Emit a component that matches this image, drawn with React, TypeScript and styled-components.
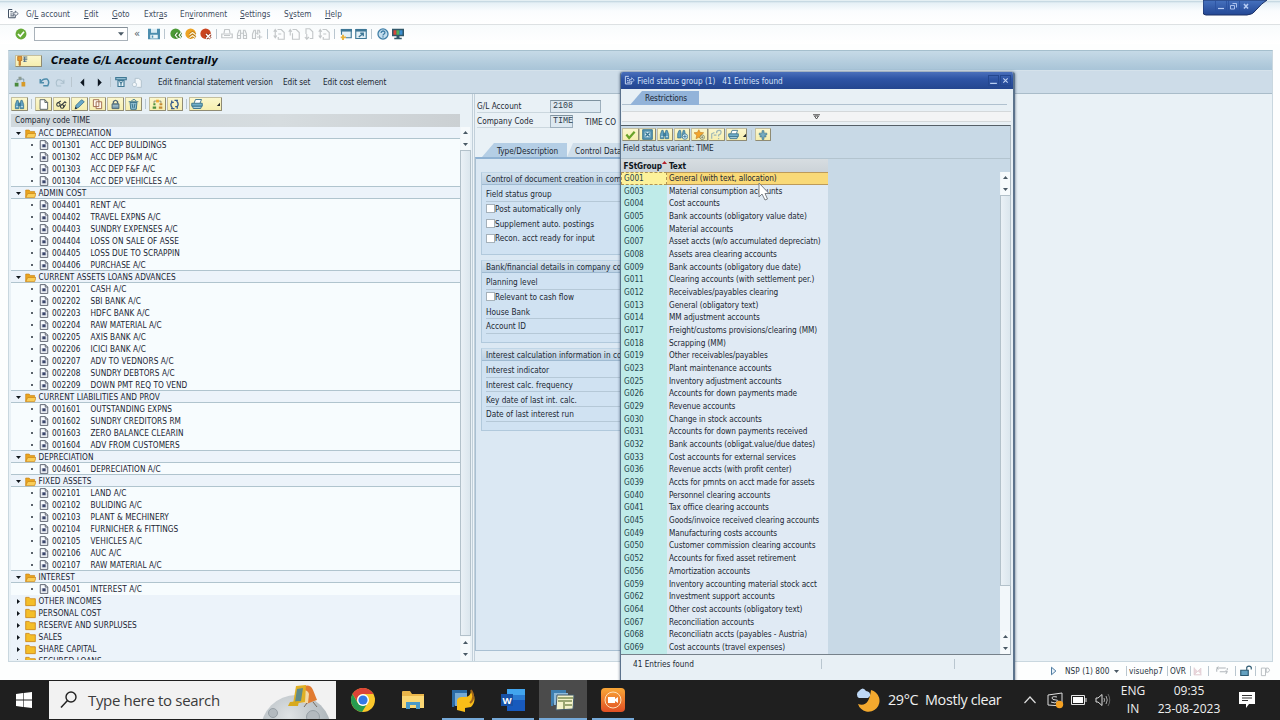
import React from 'react';
import styled, { createGlobalStyle, css } from 'styled-components';

const GlobalStyle = createGlobalStyle`
	* {
		box-sizing: border-box;
	}

	body {
		margin: 0;
		overflow: hidden;
		background: #fdfefe;
		font-family: 'DejaVu Sans Condensed', 'DejaVu Sans', sans-serif;
		font-stretch: condensed;
		font-size: 8.2px;
		line-height: 12px;
		letter-spacing: -0.08px;
		color: #1c2833;
	}

	svg {
		display: block;
		flex: none;
	}
`;

const Screen = styled.div`
	position: relative;
	width: 1280px;
	height: 720px;
	display: flex;
	flex-direction: column;
	overflow: hidden;
	white-space: nowrap;
`;

/* ---------- window chrome ---------- */

const MenuBar = styled.div`
	flex: none;
	height: 25px;
	padding: 3px 0 0 7px;
	display: flex;
	align-items: center;
	letter-spacing: 0;
	color: #3d4c60;
	border-top: 1px solid #e4eff3;
	border-bottom: 1px solid #dde1e3;
	background: linear-gradient(#bdd2dd 0, #e6f0f6 2px, #fafcfe 10px, #fff 100%);
`;

const Cell = styled.div<{ $w: number; $center?: boolean }>`
	flex: none;
	width: ${(p) => p.$w}px;
	display: flex;
	align-items: center;
	justify-content: ${(p) => (p.$center ? 'center' : 'flex-start')};
	white-space: pre;
`;

const ToolBar = styled.div`
	flex: none;
	height: 19px;
	padding: 0 0 1px 13px;
	display: flex;
	align-items: center;
	background: linear-gradient(#f8fbfc, #fff);
`;

const Command = styled.div`
	width: 94px;
	height: 14px;
	margin-left: 6px;
	padding-right: 3px;
	display: flex;
	align-items: center;
	justify-content: flex-end;
	background: #fff;
	border: 1px solid #a9b2ba;
	border-top-color: #848e97;
`;

const Chevrons = styled.div`
	width: 18px;
	text-align: center;
	font-size: 11px;
	line-height: 10px;
	color: #4b5a66;
`;

const Sep = styled.div<{ $m?: number }>`
	flex: none;
	width: 1px;
	height: 10px;
	margin: 0 ${(p) => p.$m ?? 3}px;
	background: #b9c6cf;
`;

const WindowButtons = styled.div`
	position: absolute;
	top: 0;
	left: 1203px;
	width: 64px;
	height: 16px;
`;

const Frame = styled.div`
	flex: none;
	width: 1265px;
	height: 612px;
	margin: 6px 0 0 8px;
	display: flex;
	flex-direction: column;
	background: #e9f1f6;
	border: 1px solid #c9d7df;
	border-top: 1px solid #a5bfcd;
`;

const TitleBar = styled.div`
	flex: none;
	height: 20px;
	padding-left: 6px;
	display: flex;
	align-items: center;
	background: linear-gradient(#c6dae7, #aec8da 80%, #a8c4d8);
	border-bottom: 1px solid #d5e2eb;
`;

const Title = styled.h1`
	margin: 0 0 0 9px;
	font: italic bold 11.3px/18px 'DejaVu Sans Condensed', 'DejaVu Sans', sans-serif;
	font-stretch: condensed;
	letter-spacing: 0.07px;
	color: #050a10;
`;

const YellowButton = styled.div<{ $w?: number; $h?: number }>`
	flex: none;
	width: ${(p) => p.$w ?? 17}px;
	height: ${(p) => p.$h ?? 14}px;
	display: flex;
	align-items: center;
	justify-content: center;
	background: linear-gradient(#fbf7cd, #f6eeaf);
	border: 1px solid #c4bf9f;
	border-right-color: #8f8b73;
	border-bottom-color: #8f8b73;
	border-radius: 1px;
`;

const AppBar = styled.div`
	flex: none;
	height: 23px;
	padding-left: 5px;
	display: flex;
	align-items: center;
	background: #cddce8;
	border-bottom: 1px solid #a9bcc9;
`;

const Body = styled.div`
	flex: 1;
	min-height: 0;
	display: flex;
`;

/* ---------- account tree ---------- */

const TreePane = styled.div`
	flex: none;
	width: 463px;
	display: flex;
	flex-direction: column;
	padding-left: 2px;
`;

const TreeTools = styled.div`
	flex: none;
	height: 20px;
	display: flex;
	align-items: center;
	gap: 1px;
`;

const TreeHead = styled.div`
	flex: none;
	width: 449px;
	height: 13px;
	padding-left: 4px;
	letter-spacing: 0;
	background: linear-gradient(90deg, #d0d8dd, #d6dcdf 60%, #cbd0d3);
`;

const TreeBody = styled.div`
	display: flex;
	height: 533px;
`;

const TreeRows = styled.div`
	width: 449px;
	overflow: hidden;
	letter-spacing: 0.06px;
	background: #ecf3fa;
`;

const TreeRow = styled.div<{ $kind: 'open' | 'closed' | 'leaf' }>`
	height: 12px;
	display: flex;
	align-items: center;
	color: #1a2533;
	padding-left: ${(p) => (p.$kind === 'leaf' ? 20 : 5)}px;
	${(p) =>
		p.$kind === 'leaf' &&
		css`
			background: #f7fcfe;
		`}
	${(p) =>
		p.$kind === 'open' &&
		css`
			box-shadow: inset 0 -1px #b0c4ce, 0 -1px #b0c4ce;
			position: relative;
		`}
`;

const Dot = styled.div`
	width: 2px;
	height: 2px;
	margin-right: 5.5px;
	border-radius: 1px;
	background: #27313b;
`;

const Scroll = styled.div<{ $thumb: number }>`
	flex: none;
	width: 10px;
	display: flex;
	flex-direction: column;
	align-items: center;
	background: #f2f7fa;

	&::before {
		content: '';
		order: 2;
		width: 9px;
		height: ${(p) => p.$thumb}px;
		background: linear-gradient(90deg, #eaf1f6, #dbe6ed);
		border: 1px solid #b3c1ca;
	}
`;

const Arrow = styled.div<{ $order?: number; $push?: boolean }>`
	order: ${(p) => p.$order ?? 0};
	width: 9px;
	height: 11.5px;
	margin-top: ${(p) => (p.$push ? 'auto' : 0)};
	display: flex;
	align-items: center;
	justify-content: center;
	background: #f6fafc;
`;

/* ---------- detail form ---------- */

const Splitter = styled.div`
	flex: none;
	width: 3px;
	display: flex;
	align-items: center;
	background: #edf4f8;
	border-left: 1px solid #c2d0da;
	border-right: 1px solid #c2d0da;
`;

const Form = styled.div`
	flex: none;
	width: 480px;
	padding-top: 5px;
	display: flex;
	flex-direction: column;
	letter-spacing: 0;
`;

const FieldRow = styled.div`
	flex: none;
	height: 15px;
	padding-left: 2px;
	display: flex;
	align-items: center;
`;

const FieldLabel = styled.div`
	width: 73px;
	border-bottom: 1px solid #cbd7de;
`;

const Field = styled.div<{ $w: number }>`
	width: ${(p) => p.$w}px;
	height: 13px;
	margin-right: 12px;
	padding-left: 2px;
	line-height: 11px;
	font-family: 'Liberation Mono', monospace;
	font-size: 8.4px;
	color: #30404c;
	background: #dde9f1;
	border: 1px solid #9eb0bd;
	border-top-color: #7e929f;
`;

const Tabs = styled.div`
	flex: none;
	height: 14px;
	margin-top: 14px;
	padding-left: 7px;
	display: flex;
`;

const Tab = styled.div<{ $w: number; $active?: boolean }>`
	width: ${(p) => p.$w}px;
	height: 14px;
	padding: 1px 0 0 ${(p) => (p.$active ? 15 : 8)}px;
	line-height: 14px;
	background: ${(p) => (p.$active ? '#b4cee5' : '#cfdeea')};
	clip-path: polygon(${(p) => (p.$active ? 12 : 6)}px 0, 100% 0, 100% 100%, 0 100%);
`;

const TabPanel = styled.div`
	flex: none;
	height: 494px;
	padding: 13px 6px 0 5px;
	display: flex;
	flex-direction: column;
	gap: 5px;
	background: #dbe8f3;
	border: 1px solid #a9c0d2;
	border-top: 2px solid #8fb2d3;
`;

const Group = styled.div`
	height: 83px;
	background: #d0e2f2;
	border: 1px solid #b1c9dc;
	border-top-color: #c0d6e7;
`;

const GroupHead = styled.div`
	height: 12px;
	margin-bottom: 2px;
	padding-left: 4px;
	line-height: 12px;
	background: linear-gradient(#d4e2ed, #bcd1e4);
	border-bottom: 1px solid #9fbad1;
`;

const GroupRow = styled.div<{ $line: boolean }>`
	height: 14.67px;
	margin-left: 4px;
	display: flex;
	align-items: center;
	padding-top: 1px;
	border-bottom: 1px solid ${(p) => (p.$line ? '#b5c8d7' : 'transparent')};
`;

const Check = styled.div`
	width: 9px;
	height: 9px;
	background: #fff;
	border: 1px solid #a5b1ba;
`;

/* ---------- value help popup ---------- */

const Popup = styled.div`
	position: absolute;
	left: 620px;
	top: 72px;
	width: 395px;
	height: 612px;
	display: flex;
	flex-direction: column;
	background: #e8f0f5;
	border: solid #5c738c;
	border-width: 0 2px 0 1px;
	border-radius: 3px 3px 0 0;
	box-shadow: 0 0 3px rgba(30, 50, 80, 0.7);
	overflow: hidden;
`;

const PopupTitle = styled.div`
	flex: none;
	height: 17px;
	padding: 0 2px 0 3px;
	display: flex;
	align-items: center;
	white-space: pre;
	letter-spacing: -0.02px;
	color: #d3e1f8;
	background: linear-gradient(#4b70bb, #2e54a5 40%, #24468f);
`;

const TitleButton = styled.div`
	width: 11px;
	height: 11px;
	margin-left: 1px;
	display: flex;
	align-items: center;
	justify-content: center;
	border: 1px solid #24478f;
`;

const Grow = styled.div`
	flex: 1;
`;

const PopupTabs = styled.div`
	flex: none;
	height: 15px;
	margin: 1px 6px 0 1px;
	padding: 1px 0 0 8px;
	border-bottom: 1px solid #b0c1cf;
`;

const PopupTab = styled.div`
	width: 69px;
	height: 14px;
	padding-left: 15px;
	line-height: 14px;
	background: #92b3d9;
	clip-path: polygon(12px 0, 100% 0, 100% 100%, 0 100%);
`;

const Collapse = styled.div`
	flex: none;
	height: 11px;
	margin: 6px 2px 3px 1px;
	display: flex;
	align-items: center;
	justify-content: center;
	background: #f3f4f5;
	border: 1px solid #d4d8da;
	border-width: 1px 0;
`;

const HitList = styled.div`
	flex: none;
	height: 530px;
	margin-right: 2px;
	display: flex;
	flex-direction: column;
	background: #c8d9e6;
	border-top: 1px solid #555f67;
	border-bottom: 1px solid #76818a;
	border-right: 1px solid #aab7c0;
`;

const HitTools = styled.div`
	flex: none;
	height: 17px;
	padding-left: 1px;
	display: flex;
	align-items: center;
	gap: 0.8px;
`;

const Variant = styled.div`
	flex: none;
	height: 16px;
	padding: 0 0 0 2px;
	line-height: 11px;
	border-bottom: 1px solid #b3c4cf;
`;

const HitHead = styled.div`
	flex: none;
	display: flex;
	width: 207px;
	height: 13px;
	font-weight: bold;
	color: #0e151c;
	line-height: 14px;
	background: linear-gradient(#d7dde1, #ccd3d8);
`;

const SortMark = styled.div`
	align-self: flex-start;
	margin-top: 1px;
`;

const HitBody = styled.div`
	flex: 1;
	min-height: 0;
	display: flex;
	justify-content: space-between;
`;

const HitRow = styled.div<{ $selected: boolean }>`
	width: 207px;
	height: 12.676px;
	display: flex;
	line-height: 13px;
	background: ${(p) => (p.$selected ? '#f9d977' : '#e0eaf4')};
	${(p) =>
		p.$selected &&
		css`
			box-shadow: inset 0 1px #bd9a59, inset 0 -1px #bd9a59;
		`}
`;

const Code = styled.div<{ $selected: boolean }>`
	width: 46px;
	padding-left: 3px;
	margin-right: 2px;
	letter-spacing: 0;
	color: #25454b;
	background: ${(p) => (p.$selected ? '#fdf29a' : '#bfebe9')};
	${(p) =>
		p.$selected &&
		css`
			border: 1px dashed #b09355;
			padding-left: 2px;
			line-height: 11px;
		`}
`;

const PopupFoot = styled.div`
	flex: none;
	height: 17px;
	padding-left: 12px;
	display: flex;
	align-items: center;
	letter-spacing: 0;
`;

const Pointer = styled.div`
	position: absolute;
	left: 758px;
	top: 182px;
`;

const StatusBar = styled.div`
	flex: none;
	height: 18px;
	margin-left: 1049px;
	display: flex;
	align-items: center;
	letter-spacing: 0.06px;
	color: #28333d;
`;

/* ---------- taskbar ---------- */

const TaskBar = styled.div`
	position: absolute;
	left: 0;
	top: 680px;
	width: 1280px;
	height: 40px;
	display: flex;
	align-items: center;
	font-family: 'Open Sans', 'Noto Sans', sans-serif;
	font-stretch: normal;
	letter-spacing: 0;
	color: #f0f0f0;
	background: #1f1f1f;
`;

const SearchBox = styled.div`
	width: 287px;
	height: 38px;
	margin-left: 1px;
	padding-left: 11px;
	display: flex;
	align-items: center;
	font-size: 15px;
	letter-spacing: -0.33px;
	color: #3b3b3b;
	background: #f2f2f2;
	overflow: hidden;

	span {
		margin-left: 11px;
		width: 173px;
	}
`;

const Task = styled.div<{ $w?: number; $open?: boolean; $active?: boolean }>`
	width: ${(p) => p.$w ?? 50}px;
	height: 40px;
	display: flex;
	align-items: center;
	justify-content: center;
	background: ${(p) => (p.$active ? '#4b4b4b' : 'transparent')};
	${(p) =>
		p.$open &&
		css`
			border-bottom: 2px solid #76a9d8;
			padding-top: 2px;
			width: 42px;
			margin: 0 4px;
		`}
	${(p) =>
		p.$active &&
		css`
			width: 48px;
			margin: 0 1px;
		`}
`;

const Stack = styled.div<{ $w: number }>`
	width: ${(p) => p.$w}px;
	font-size: 12px;
	line-height: 18px;
	text-align: center;
`;

const Weather = styled.div`
	width: 136px;
	font-size: 14.4px;
	line-height: 20px;
	letter-spacing: -0.36px;
	white-space: pre;
`;

/* ---------- icons ---------- */

const blue = '#4d8eae';
const grey = '#c3c7c9';

const shapes: Record<string, React.ReactNode> = {
	exit: (
		<g fill="none" stroke="currentColor" strokeWidth="1.3">
			<path d="M7 2H2v11h9v-2M4.500 5h3M4.500 8h2M4.500 10.500h5" />
			<path d="M8 6.500h3V4l4 3.500-4 3.500V9H8z" strokeWidth="1" />
		</g>
	),
	ok: (
		<g>
			<circle cx="8" cy="8" r="7.300" fill="#67ab38" />
			<path d="M4 8l3 3 5-6" fill="none" stroke="#fff" strokeWidth="2.200" />
		</g>
	),
	save: (
		<g>
			<path d="M0 1h4v5h8V1h4v14H0z" fill={blue} />
			<path d="M4 1h8v5H4z" fill="#d9ecf4" />
			<path d="M3 9h10v5H3z" fill="#eaf5f9" />
			<path d="M6 10v3" stroke={blue} strokeWidth="2" />
		</g>
	),
	back: (
		<g>
			<circle cx="7.500" cy="7.500" r="7" fill="#4c9a37" />
			<path d="M10 6L7 9.500l3 3.500M15 6l-3 3.500 3 3.500" fill="none" stroke="#2d6c20" strokeWidth="3.500" />
			<path d="M10 6L7 9.500l3 3.500M15 6l-3 3.500 3 3.500" fill="none" stroke="#f4fcee" strokeWidth="1.700" />
		</g>
	),
	up: (
		<g>
			<circle cx="7.500" cy="7.500" r="7" fill="#eda323" />
			<path d="M6 9l4-3 4 3M6 13l4-3 4 3" fill="none" stroke="#b77410" strokeWidth="3.500" />
			<path d="M6 9l4-3 4 3M6 13l4-3 4 3" fill="none" stroke="#fff7d8" strokeWidth="1.700" />
		</g>
	),
	cancel: (
		<g>
			<circle cx="7.500" cy="7.500" r="7" fill="#c9431f" />
			<path d="M8 8l6 6M14 8l-6 6" stroke="#86250f" strokeWidth="4" />
			<path d="M8 8l6 6M14 8l-6 6" stroke="#fff" strokeWidth="2" />
		</g>
	),
	printG: <path d="M4 7l1-5h6l1 5M1 8h14v5H1zM4 10h8" fill="none" stroke={grey} strokeWidth="1.600" />,
	findG: <path d="M2 14V8l2-5h2v11zM14 14V8l-2-5h-2v11zM6 7h4M2 10h4M10 10h4" fill="none" stroke={grey} strokeWidth="1.600" />,
	findNextG: (
		<path d="M2 14V8l2-5h2v11zM12 7l-1-4H9v6M6 7h3M8 12h7M11.500 9v6" fill="none" stroke={grey} strokeWidth="1.600" />
	),
	pageUpUp: <path d="M6 2h5l4 4v9H7v-3M3 12V3M1 5l2-3 2 3M1 10l2 3 2-3M7 8h4" fill="none" stroke={grey} strokeWidth="1.500" />,
	pageUp: <path d="M6 2h5l4 4v9H6V7M3 10V2M1 5l2-3 2 3" fill="none" stroke={grey} strokeWidth="1.500" />,
	pageDown: <path d="M4 8V1h5l4 4v9H9M5 8v7M2.500 12L5 15l3-3" fill="none" stroke={grey} strokeWidth="1.500" />,
	session: (
		<g fill="none" stroke="#3e7796" strokeWidth="1.500">
			<path d="M2 9V2h13v11H8" fill="#e3f0f7" />
			<path d="M1 3h15" strokeWidth="3.500" />
			<path d="M4 9v7M1 12.500h7" stroke="#e9b23b" strokeWidth="2.500" />
		</g>
	),
	shortcut: (
		<g fill="none" stroke="#3e7796" strokeWidth="1.500">
			<path d="M1 2h14v12H1z" fill="#e3f0f7" />
			<path d="M1 3h14" strokeWidth="3.500" />
			<path d="M5 12l5-4M7 7h4v4" strokeWidth="1.800" />
		</g>
	),
	help: (
		<g fill="none" stroke="#3f7ea6" strokeWidth="1.700">
			<circle cx="8" cy="8" r="6.700" fill="#c4dded" />
			<path d="M5.500 6.500C5.500 3 11 3.300 10.500 6.500 10.300 8 8 8 8 10M8 11v1.800" />
		</g>
	),
	monitor: (
		<g>
			<path d="M0 1h16v10H0zM6 11h4v2h3v2H3v-2h3z" fill="#31586a" />
			<path d="M2 3h4v6H2z" fill="#d7473a" />
			<path d="M6 3h4v6H6z" fill="#52b05a" />
			<path d="M10 3h4v6h-4z" fill="#3b8ed1" />
		</g>
	),
	tree: (
		<g>
			<path d="M4 8V5h5V3M9 4h4v5" fill="none" stroke="#6b8894" />
			<path d="M1 9h5v5H1z" fill="#4a8a3d" />
			<path d="M6 1h4v4H6z" fill="#8d9c93" />
			<path d="M10 8h5v6h-5z" fill="#d79a28" />
		</g>
	),
	undo: <path d="M3 4v5h5M3 9q3-6 9-5 4 3 1 9H7" fill="none" stroke="#4f8dac" strokeWidth="2" />,
	redo: <path d="M13 4v5H8M13 9Q10 3 4 4q-4 3-1 9h6" fill="none" stroke="#aabfcc" strokeWidth="1.500" />,
	left: <path d="M11 1v14L4 8z" fill="#0d1620" />,
	right: <path d="M5 1v14l7-7z" fill="#0d1620" />,
	display: (
		<g fill="none" stroke="#3f7894" strokeWidth="1.500">
			<path d="M1 2h14v3H1z" fill="#8fbbd0" />
			<path d="M4 6h8v8H4z" fill="#e8f3f8" />
			<path d="M6 7l2 3 2-3M8 10v3" />
		</g>
	),
	other: <path d="M6 8V2h5l4 3v10H9M5 8a3 3 0 1 0 .1 0" fill="#f2f7fa" stroke="#aebfca" strokeWidth="1.300" />,
	find: (
		<g fill="#62a2c1" stroke="#34718f" strokeWidth="1.100">
			<path d="M2 14V8l2-6h2l1 5v7zM14 14V8l-2-6h-2L9 7v7zM7 6h2v4H7z" />
			<path d="M3 11h3M10 11h3" stroke="#d6edf6" />
		</g>
	),
	findNext: (
		<g fill="#62a2c1" stroke="#34718f" strokeWidth="1.100">
			<path d="M1 13V7l2-5h2l1 5v6zM12 8l-1-6H9L8 7v6z" />
			<circle cx="11.500" cy="11" r="4" fill="#d9eef7" />
			<path d="M9 11h5M11.500 8.500v5" />
		</g>
	),
	page: <path d="M3 1h7l4 4v10H3zM10 1v4h4" fill="#fff" stroke="#4d5961" strokeWidth="1.300" />,
	glasses: (
		<g fill="none" stroke="#2d3436" strokeWidth="1.500">
			<circle cx="3.500" cy="8" r="2.500" />
			<circle cx="9" cy="11" r="2.500" />
			<path d="M2 6l5-3M8 9l5-5 2 2M11 12l3-4" />
		</g>
	),
	pencil: (
		<g>
			<path d="M2 14l1-5 8-8 4 3-8 8z" fill="#69a8c9" stroke="#276487" />
			<path d="M1 15l1-4 3 3z" fill="#28373f" />
		</g>
	),
	copy: <path d="M2 1h8v10H2zM6 4h8v10H6z" fill="#fff8ef" stroke="#9b6549" strokeWidth="1.300" />,
	lock: (
		<g stroke="#4e6673" strokeWidth="1.400">
			<path d="M5 7V4q3-4 6 0v3" fill="none" strokeWidth="2" />
			<path d="M3 7h10v7H3z" fill="#7299ab" />
			<path d="M4 10h8" stroke="#b8cdd7" />
		</g>
	),
	trash: (
		<g fill="#91bfd1" stroke="#38728d" strokeWidth="1.400">
			<path d="M3 5h10l-1 10H4z" />
			<path d="M1 4h14M5 3l2-2h3l2 2M6 7l1 6M10 7l-1 6" fill="none" />
		</g>
	),
	hierarchy: (
		<g>
			<path d="M3 6V3h10v3" fill="none" stroke="#6b6b50" />
			<path d="M6 1h4v4H6z" fill="#f0aa34" />
			<path d="M2 6h3v3H2zM1 11h5v3H1z" fill="#4d9140" />
			<path d="M11 6h4v3h-4zM10 11h5v3h-5z" fill="#c38b36" />
		</g>
	),
	refresh: (
		<path d="M5 13Q1 9 4 5l3 0M4 2v4M11 3q4 4 1 8H9M12 14v-4M8 2h5M3 14h5" fill="none" stroke="#345b8c" strokeWidth="1.900" />
	),
	print: (
		<g stroke="#346f8a" strokeWidth="1.200">
			<path d="M4 7l2-5h8l-2 5" fill="#fff" />
			<path d="M1 7h14v4H1z" fill="#72afc9" />
			<path d="M2 11h12l-1 3H3z" fill="#a8d0df" />
		</g>
	),
	badge: (
		<g>
			<path d="M1 2h6v6H5v7H3V8H1z" fill="#e59a2a" stroke="#a95f20" />
			<path d="M9 3h6M9 6h6M9 9h5M11 2v8" stroke="#57748c" strokeWidth="1.500" />
		</g>
	),
	check: <path d="M2 8l4 5 8-9" fill="none" stroke="#69a329" strokeWidth="3.200" />,
	close: (
		<g>
			<path d="M1 1h14v14H1z" fill="#5594b3" stroke="#347391" strokeWidth="1.300" />
			<path d="M4 4h8v8H4z" fill="#d4eaf2" />
			<path d="M5 5l6 6M11 5l-6 6" stroke="#347391" strokeWidth="1.800" />
		</g>
	),
	star: (
		<g>
			<path d="M7 1l2 4 5 .5-4 3.500 1 5-4-2-4 2 1-5-4-3.500L5 5z" fill="#f3a52d" stroke="#c98427" />
			<circle cx="12" cy="12" r="3.300" fill="#fffbd9" stroke="#66714e" />
			<path d="M10 12h4M12 10v4" stroke="#66714e" />
		</g>
	),
	info: <path d="M1 14v-7l4-2M4 9h4M8 6q0-4 4-4t2 5l-3 2v2M11 13v2" fill="none" stroke="#9fb8b7" strokeWidth="1.800" />,
	pin: <path d="M6.500 1h3v4H14v3h-3l2 3h-3.500v4h-3v-4H3l2-3H2V5h4.500z" fill="#77acc1" stroke="#33708c" />,
	doc: (
		<g>
			<path d="M2 1h8l4 4v10H2z" fill="#f9fcff" stroke="#4a5160" strokeWidth="1.400" />
			<path d="M10 1v4h4" fill="none" stroke="#4a5160" strokeWidth="1.300" />
			<path d="M4 8h8M4 11h8" stroke="#8d94a8" strokeWidth="1.200" />
			<path d="M5.500 7h5v4.500h-5z" fill="#3a466c" />
		</g>
	),
	folder: <path d="M1 2h5l2 2h7v10H1z" fill="#f4be29" stroke="#c98417" strokeWidth="1.200" />,
	folderOpen: (
		<g stroke="#c98417">
			<path d="M1 14V3h5l2 2h6v3" fill="#eaa51e" />
			<path d="M1 14l3-6h12l-2 6z" fill="#f9cd58" />
		</g>
	),
	winMin: <path d="M2 13h12" stroke="#b9cef2" strokeWidth="2.200" />,
	winClose: <path d="M3 3l10 10M13 3L3 13" stroke="#c3d4f4" strokeWidth="2.400" />,
	play: <path d="M4 2v12l7-6z" fill="#e8f2fa" stroke="#43729b" strokeWidth="1.500" />,
	chart: <path d="M3 2v11h11M4 12l9-9v9" fill="#ead6dc" stroke="#dfcad1" />,
	arrows: <path d="M1 4h12M3 2L1 4l2 2M15 9H5M13 7l2 2-2 3M15 4v3M1 5v4" fill="none" stroke="#a5abb1" strokeWidth="1.200" />,
	unlock: (
		<g stroke="#2b5870" strokeWidth="1.500">
			<path d="M9 7V3q3-3 6 0v3" fill="none" />
			<path d="M1 7h10v7H1z" fill="#64a1c0" />
		</g>
	),
	pilot: <path d="M2 14V3h6v11H2M9 3h3q4 3 0 6H9z" fill="none" stroke="#b4b9be" strokeWidth="1.300" />,
};

const Icon: React.FunctionComponent<{ name: string; size?: number }> = ({ name, size = 12 }) => (
	<svg width={size} height={size} viewBox="0 0 16 16">
		{shapes[name]}
	</svg>
);

const Tri: React.FunctionComponent<{ dir: string; size?: number; fill?: string }> = ({ dir, size = 5, fill = '#4a5965' }) => (
	<svg width={size} height={size} viewBox="0 0 10 10">
		<path
			d={{ up: 'M0 8L5 2l5 6z', down: 'M0 2h10L5 8z', right: 'M2 0v10l6-5z', corner: 'M10 2v8H2z' }[dir]}
			fill={fill}
		/>
	</svg>
);

const ScrollBar: React.FunctionComponent<{ thumb: number }> = ({ thumb }) => (
	<Scroll $thumb={thumb}>
		<Arrow>
			<Tri dir="up" />
		</Arrow>
		<Arrow>
			<Tri dir="down" />
		</Arrow>
		<Arrow $order={3} $push>
			<Tri dir="up" />
		</Arrow>
		<Arrow $order={4}>
			<Tri dir="down" />
		</Arrow>
	</Scroll>
);

/* ---------- data ---------- */

// label before the mnemonic, mnemonic, rest, width up to the next entry
const menu: [string, string, string, number][] = [
	['G/', 'L', ' account', 58],
	['', 'E', 'dit', 28],
	['', 'G', 'oto', 32],
	['Extr', 'a', 's', 36],
	['En', 'v', 'ironment', 60],
	['', 'S', 'ettings', 44],
	['S', 'y', 'stem', 41],
	['', 'H', 'elp', 30],
];

const tree: { name: string; items?: string[] }[] = [
	{
		name: 'ACC DEPRECIATION',
		items: ['001301 ACC DEP BULIDINGS', '001302 ACC DEP P&M A/C', '001303 ACC DEP F&F A/C', '001304 ACC DEP VEHICLES A/C'],
	},
	{
		name: 'ADMIN COST',
		items: [
			'004401 RENT A/C',
			'004402 TRAVEL EXPNS A/C',
			'004403 SUNDRY EXPENSES A/C',
			'004404 LOSS ON SALE OF ASSE',
			'004405 LOSS DUE TO SCRAPPIN',
			'004406 PURCHASE A/C',
		],
	},
	{
		name: 'CURRENT ASSETS LOANS ADVANCES',
		items: [
			'002201 CASH A/C',
			'002202 SBI BANK A/C',
			'002203 HDFC BANK A/C',
			'002204 RAW MATERIAL A/C',
			'002205 AXIS BANK A/C',
			'002206 ICICI BANK A/C',
			'002207 ADV TO VEDNORS A/C',
			'002208 SUNDRY DEBTORS A/C',
			'002209 DOWN PMT REQ TO VEND',
		],
	},
	{
		name: 'CURRENT LIABILITIES AND PROV',
		items: ['001601 OUTSTANDING EXPNS', '001602 SUNDRY CREDITORS RM', '001603 ZERO BALANCE CLEARIN', '001604 ADV FROM CUSTOMERS'],
	},
	{ name: 'DEPRECIATION', items: ['004601 DEPRECIATION A/C'] },
	{
		name: 'FIXED ASSETS',
		items: [
			'002101 LAND A/C',
			'002102 BULIDING A/C',
			'002103 PLANT & MECHINERY',
			'002104 FURNICHER & FITTINGS',
			'002105 VEHICLES A/C',
			'002106 AUC A/C',
			'002107 RAW MATERIAL A/C',
		],
	},
	{ name: 'INTEREST', items: ['004501 INTEREST A/C'] },
	{ name: 'OTHER INCOMES' },
	{ name: 'PERSONAL COST' },
	{ name: 'RESERVE AND SURPLUSES' },
	{ name: 'SALES' },
	{ name: 'SHARE CAPITAL' },
	{ name: 'SECURED LOANS' },
];

const groups: { title: string; rows: [string, boolean][] }[] = [
	{
		title: 'Control of document creation in com',
		rows: [
			['Field status group', false],
			['Post automatically only', true],
			['Supplement auto. postings', true],
			['Recon. acct ready for input', true],
		],
	},
	{
		title: 'Bank/financial details in company cod',
		rows: [
			['Planning level', false],
			['Relevant to cash flow', true],
			['House Bank', false],
			['Account ID', false],
		],
	},
	{
		title: 'Interest calculation information in cor',
		rows: [
			['Interest indicator', false],
			['Interest calc. frequency', false],
			['Key date of last int. calc.', false],
			['Date of last interest run', false],
		],
	},
];

const hits = `G001 General (with text, allocation)
G003 Material consumption accounts
G004 Cost accounts
G005 Bank accounts (obligatory value date)
G006 Material accounts
G007 Asset accts (w/o accumulated depreciatn)
G008 Assets area clearing accounts
G009 Bank accounts (obligatory due date)
G011 Clearing accounts (with settlement per.)
G012 Receivables/payables clearing
G013 General (obligatory text)
G014 MM adjustment accounts
G017 Freight/customs provisions/clearing (MM)
G018 Scrapping (MM)
G019 Other receivables/payables
G023 Plant maintenance accounts
G025 Inventory adjustment accounts
G026 Accounts for down payments made
G029 Revenue accounts
G030 Change in stock accounts
G031 Accounts for down payments received
G032 Bank accounts (obligat.value/due dates)
G033 Cost accounts for external services
G036 Revenue accts (with profit center)
G039 Accts for pmnts on acct made for assets
G040 Personnel clearing accounts
G041 Tax office clearing accounts
G045 Goods/invoice received clearing accounts
G049 Manufacturing costs accounts
G050 Customer commission clearing accounts
G052 Accounts for fixed asset retirement
G056 Amortization accounts
G059 Inventory accounting material stock acct
G062 Investment support accounts
G064 Other cost accounts (obligatory text)
G067 Reconciliation accounts
G068 Reconciliatn accts (payables - Austria)
G069 Cost accounts (travel expenses)`.split('\n');

/* ---------- sections ---------- */

const Header = () => (
	<>
		<MenuBar>
			<Cell $w={19}>
				<Icon name="exit" size={12} />
			</Cell>
			{menu.map(([before, key, after, width]) => (
				<Cell key={before + key + after} $w={width}>
					{before}
					<u>{key}</u>
					{after}
				</Cell>
			))}
		</MenuBar>
		<ToolBar>
			<Cell $w={15} $center>
				<Icon name="ok" />
			</Cell>
			<Command>
				<Tri dir="down" size={6} />
			</Command>
			<Chevrons>«</Chevrons>
			<Cell $w={15} $center>
				<Icon name="save" />
			</Cell>
			<Sep />
			{['back', 'up', 'cancel'].map((name) => (
				<Cell key={name} $w={15} $center>
					<Icon name={name} />
				</Cell>
			))}
			<Sep />
			{['printG', 'findG', 'findNextG'].map((name) => (
				<Cell key={name} $w={14.8} $center>
					<Icon name={name} />
				</Cell>
			))}
			<Sep />
			{['pageUpUp', 'pageUp', 'pageDown', 'pageUpUp'].map((name, i) => (
				<Cell key={i} $w={15} $center>
					<Icon name={name} />
				</Cell>
			))}
			<Sep />
			<Cell $w={15} $center>
				<Icon name="session" />
			</Cell>
			<Cell $w={15} $center>
				<Icon name="shortcut" />
			</Cell>
			<Sep />
			<Cell $w={15} $center>
				<Icon name="help" />
			</Cell>
			<Cell $w={15} $center>
				<Icon name="monitor" />
			</Cell>
		</ToolBar>
		<WindowButtons>
			<svg width="64" height="16" viewBox="0 0 64 16">
				<defs>
					<linearGradient id="wb" x2="0" y2="1">
						<stop offset="0" stopColor="#4672bf" />
						<stop offset="1" stopColor="#234795" />
					</linearGradient>
				</defs>
				<path d="M0 0h64Q58 4 54 9q-4 6-10 6H3q-3 0-3-3z" fill="url(#wb)" stroke="#1d3266" />
				<g fill="none" stroke="#b7ccf3" strokeWidth="1.2">
					<path d="M15 8.500h6" />
					<path d="M29.500 3.500h4v4M27.500 5.500h4v3.500h-4z" strokeWidth="0.9" />
					<path d="M41 4l4 4.500M45 4l-4 4.500" strokeWidth="1.6" />
				</g>
				<path d="M12.500 1v10h11V1M25.500 1v10h11V1" fill="none" stroke="#2a50a0" strokeWidth="0.8" />
			</svg>
		</WindowButtons>
	</>
);

const Tree = () => (
	<TreePane>
		<TreeTools>
			<YellowButton $w={16.5}>
				<Icon name="find" size={11} />
			</YellowButton>
			<Sep $m={2.3} />
			{['page', 'glasses', 'pencil', 'copy', 'lock', 'trash'].map((name) => (
				<YellowButton key={name}>
					<Icon name={name} size={11} />
				</YellowButton>
			))}
			<Sep $m={2} />
			<YellowButton $w={16.5}>
				<Icon name="hierarchy" size={11} />
			</YellowButton>
			<YellowButton $w={16.5}>
				<Icon name="refresh" size={11} />
			</YellowButton>
			<Sep $m={1.5} />
			<YellowButton $w={33}>
				<Icon name="print" size={12} />
				<Cell $w={13} />
				<Tri dir="corner" size={4} fill="#20262b" />
			</YellowButton>
		</TreeTools>
		<TreeHead>Company code TIME</TreeHead>
		<TreeBody>
			<TreeRows>
				{tree.map(({ name, items }) => (
					<React.Fragment key={name}>
						<TreeRow $kind={items ? 'open' : 'closed'}>
							<Cell $w={9}>
								<Tri dir={items ? 'down' : 'right'} size={5} fill="#10161c" />
							</Cell>
							<Cell $w={13.5}>
								<Icon name={items ? 'folderOpen' : 'folder'} size={11} />
							</Cell>
							{name}
						</TreeRow>
						{items &&
							items.map((item) => (
								<TreeRow key={item} $kind="leaf">
									<Dot />
									<Cell $w={13.5}>
										<Icon name="doc" size={10} />
									</Cell>
									<Cell $w={38.5}>{item.slice(0, 6)}</Cell>
									{item.slice(7)}
								</TreeRow>
							))}
					</React.Fragment>
				))}
			</TreeRows>
			<ScrollBar thumb={484} />
		</TreeBody>
	</TreePane>
);

const Details = () => (
	<Form>
		<FieldRow>
			<FieldLabel>G/L Account</FieldLabel>
			<Field $w={51}>2108</Field>
		</FieldRow>
		<FieldRow>
			<FieldLabel>Company Code</FieldLabel>
			<Field $w={23}>TIME</Field>
			TIME CO
		</FieldRow>
		<Tabs>
			<Tab $w={85} $active>
				Type/Description
			</Tab>
			<Tab $w={85}>Control Data</Tab>
		</Tabs>
		<TabPanel>
			{groups.map(({ title, rows }) => (
				<Group key={title}>
					<GroupHead>{title}</GroupHead>
					{rows.map(([label, box]) => (
						<GroupRow key={label} $line={!box}>
							{box && <Check />}
							{label}
						</GroupRow>
					))}
				</Group>
			))}
		</TabPanel>
	</Form>
);

const ValueHelp = () => (
	<Popup>
		<PopupTitle>
			<Icon name="exit" size={11} />
			{' Field status group (1)   41 Entries found'}
			<Grow />
			<TitleButton>
				<Icon name="winMin" size={9} />
			</TitleButton>
			<TitleButton>
				<Icon name="winClose" size={7} />
			</TitleButton>
		</PopupTitle>
		<PopupTabs>
			<PopupTab>Restrictions</PopupTab>
		</PopupTabs>
		<Collapse>
			<svg width="7" height="6" viewBox="0 0 14 12">
				<path d="M0 1.500h14M3 4h8L7 10z" fill="#fff" stroke="#222" strokeWidth="1.500" />
			</svg>
		</Collapse>
		<HitList>
			<HitTools>
				{['check', 'close', 'find', 'findNext', 'star', 'info'].map((name) => (
					<YellowButton key={name} $w={16.5} $h={13}>
						<Icon name={name} size={11} />
					</YellowButton>
				))}
				<YellowButton $w={21.5} $h={13}>
					<Icon name="print" size={11} />
					<Cell $w={3} />
					<Tri dir="corner" size={4} fill="#20262b" />
				</YellowButton>
				<Sep $m={2.5} />
				<YellowButton $w={16} $h={13}>
					<Icon name="pin" size={10} />
				</YellowButton>
			</HitTools>
			<Variant>Field status variant: TIME</Variant>
			<HitHead>
				<Cell $w={48}>
					{' FStGroup'}
					<SortMark>
						<Tri dir="up" size={5} fill="#b51f2b" />
					</SortMark>
				</Cell>
				Text
			</HitHead>
			<HitBody>
				<div>
					{hits.map((hit, i) => (
						<HitRow key={hit} $selected={i === 0}>
							<Code $selected={i === 0}>{hit.slice(0, 4)}</Code>
							{hit.slice(5)}
						</HitRow>
					))}
				</div>
				<ScrollBar thumb={389} />
			</HitBody>
		</HitList>
		<PopupFoot>
			<Cell $w={188}>41 Entries found</Cell>
			<Sep $m={0} />
			<Cell $w={132} />
			<Sep $m={0} />
		</PopupFoot>
	</Popup>
);

const Status = () => (
	<StatusBar>
		<Cell $w={16}>
			<Icon name="play" size={10} />
		</Cell>
		<Cell $w={49}>NSP (1) 800</Cell>
		<Cell $w={10}>
			<Tri dir="down" size={5} />
		</Cell>
		<Sep $m={2} />
		<Cell $w={36}>visuehp7</Cell>
		<Sep $m={2} />
		<Cell $w={19}>OVR</Cell>
		<Sep $m={1} />
		<Cell $w={15}>
			<Icon name="chart" size={11} />
		</Cell>
		<Sep $m={1} />
		<Cell $w={24} $center>
			<Icon name="arrows" />
		</Cell>
		<Sep $m={1} />
		<Cell $w={17} $center>
			<Icon name="unlock" />
		</Cell>
		<Sep $m={1} />
		<Cell $w={16} $center>
			<Icon name="pilot" size={11} />
		</Cell>
	</StatusBar>
);

const Windows = () => (
	<TaskBar>
		<Task $w={48}>
			<svg width="16" height="16" viewBox="0 0 16 16">
				<path d="M0 2l7-1v6.600H0zM7.600.9L16 0v7.600H7.600zM0 8.400h7V15l-7-1zM7.600 8.400H16V16l-8.400-1z" fill="#fff" />
			</svg>
		</Task>
		<SearchBox>
			<svg width="17" height="18" viewBox="0 0 17 18">
				<circle cx="11" cy="6" r="5" fill="none" stroke="#222" strokeWidth="1.400" />
				<path d="M7.500 9.500L1 16.500" stroke="#222" strokeWidth="1.500" />
			</svg>
			<span>Type here to search</span>
			<svg width="72" height="38" viewBox="0 0 72 38">
				<defs>
					<radialGradient id="moon" cx="0.4" cy="0.3" r="0.7">
						<stop offset="0" stopColor="#dfe3e5" />
						<stop offset="1" stopColor="#a4adb3" />
					</radialGradient>
				</defs>
				<circle cx="35" cy="49" r="35" fill="url(#moon)" />
				<g fill="#b3babf" stroke="#969fa5">
					<circle cx="12" cy="32" r="4.500" />
					<circle cx="52" cy="36" r="6.500" />
				</g>
				<path d="M41 6q8-4 11 3l4 10-11 4z" fill="#e17b31" />
				<path d="M42 9q5 0 6 4l-1 9h-5z" fill="#f2d9a4" />
				<path d="M35 5l10-1-1 17-12 2z" fill="#e0b024" />
				<path d="M36 8l6-1-2 13-6 1z" fill="#5f8a89" />
				<path d="M29 21l9-1-1 5H27z" fill="#d8aa1e" />
				<path d="M46 22l-3 4M52 21l4 5" stroke="#766b5e" />
			</svg>
		</SearchBox>
		<Cell $w={2} />
		<Task>
			<svg width="24" height="24" viewBox="0 0 24 24">
				<circle cx="12" cy="12" r="12" fill="#fbc72b" />
				<path d="M1.600 6A12 12 0 0 1 22.400 6H12A6 6 0 0 0 6.500 14z" fill="#dc4337" />
				<path d="M1.600 6A12 12 0 0 0 11 24l6-9.500A6 6 0 0 1 6.800 15z" fill="#279b50" />
				<circle cx="12" cy="12" r="6" fill="#fff" />
				<circle cx="12" cy="12" r="4.600" fill="#3478e5" />
			</svg>
		</Task>
		<Task>
			<svg width="22" height="18" viewBox="0 0 22 18">
				<path d="M0 1q0-1 1-1h7l2 3h12v14H0z" fill="#eab64a" />
				<path d="M0 5h22v12H0z" fill="#fbd774" />
				<path d="M4 18v-7h14v7h-4v-4H8v4z" fill="#4a9ac9" />
			</svg>
		</Task>
		<Task $open>
			<svg width="23" height="23" viewBox="0 0 23 23">
				<path d="M0 1h15v5H7L2 18H0z" fill="#2b6ba6" />
				<path d="M3 4h12v5H7v8H3z" fill="#76aad4" />
				<path d="M5 11q1-3 5-3h4q5-1 5-7 7 10 0 17l-6 1v4l-8-2z" fill="#fabe18" />
				<path d="M19 1q5 8-1 13" fill="none" stroke="#a1661a" strokeWidth="2" />
			</svg>
		</Task>
		<Task $open>
			<svg width="24" height="22" viewBox="0 0 24 22">
				<path d="M6 0h18v22H6z" fill="#185abd" />
				<path d="M6 0h18v6H6z" fill="#42a5ee" />
				<path d="M6 6h18v5H6z" fill="#2b7cd3" />
				<path d="M0 5h12v12H0z" fill="#1751a5" />
				<text x="1.500" y="14.500" fontSize="9.500" fontWeight="700" fill="#fff">
					W
				</text>
			</svg>
		</Task>
		<Task $open $active>
			<svg width="24" height="21" viewBox="0 0 24 21">
				<path d="M0 0h15v4H5L2 16H0z" fill="#3e7fb1" />
				<path d="M3 3h14v3H6v9H3z" fill="#8fbbdb" />
				<path d="M6 5h17l-1 14-17 1z" fill="#f3f2ca" stroke="#43586a" />
				<path d="M7 8h15M7 11h14M13 12v7M14 15h7" stroke="#7d8d55" strokeWidth="1.500" />
			</svg>
		</Task>
		<Task $open>
			<svg width="24" height="24" viewBox="0 0 24 24">
				<defs>
					<linearGradient id="rec" x2="0" y2="1">
						<stop offset="0" stopColor="#f9a737" />
						<stop offset="1" stopColor="#e14f24" />
					</linearGradient>
				</defs>
				<rect width="24" height="24" rx="4" fill="url(#rec)" />
				<circle cx="12" cy="12" r="8" fill="none" stroke="#fee0b8" />
				<path d="M7 9h7v6H7zM14 11l3-2v6l-3-2z" fill="#fff" />
			</svg>
		</Task>
		<Grow />
		<Cell $w={33}>
			<svg width="26" height="24" viewBox="0 0 26 24">
				<path d="M16 2a11 11 0 1 1-13 14Q14 20 16 2z" fill="#f3a92e" />
				<path d="M4 10a4 4 0 0 1 0-7q4-5 7 0 5 1 4 5l-2 2z" fill="#bdd7f5" />
			</svg>
		</Cell>
		<Weather>29°C  Mostly clear</Weather>
		<Cell $w={23}>
			<svg width="12" height="8" viewBox="0 0 12 8">
				<path d="M.5 7L6 1l5.500 6" fill="none" stroke="#ddd" strokeWidth="1.200" />
			</svg>
		</Cell>
		<Cell $w={24}>
			<svg width="17" height="17" viewBox="0 0 17 17">
				<path d="M1 3l14-2v13L1 13z" fill="none" stroke="#ddd" />
				<path d="M10 5q-5-1-5 1t4 2-1 3l-4-1" fill="none" stroke="#ddd" />
				<circle cx="12.500" cy="12.500" r="3.700" fill="#f5a122" />
			</svg>
		</Cell>
		<Cell $w={24}>
			<svg width="16" height="10" viewBox="0 0 16 10">
				<path d="M.5.5h13v9H.5zM15 3v4" fill="none" stroke="#e6e6e6" />
				<path d="M2 2h10v6H2z" fill="#fff" />
			</svg>
		</Cell>
		<Cell $w={20}>
			<svg width="16" height="14" viewBox="0 0 16 14">
				<path d="M1 5h2l4-3.500v11L3 9H1z" fill="none" stroke="#ddd" />
				<path d="M9 5q1 2 0 4M11 3q2.500 4 0 8" fill="none" stroke="#aaa" />
				<path d="M13 1q3.500 6 0 12" fill="none" stroke="#666" />
			</svg>
		</Cell>
		<Stack $w={36}>
			ENG
			<br />
			IN
		</Stack>
		<Stack $w={76}>
			09:35
			<br />
			23-08-2023
		</Stack>
		<Cell $w={40} $center>
			<svg width="16" height="16" viewBox="0 0 16 16">
				<path d="M0 0h16v12H10l-3 4v-4H0z" fill="#fff" />
				<path d="M3 3.500h10M3 6h10M3 8.500h6" stroke="#333" />
			</svg>
		</Cell>
		<Cell $w={13} />
	</TaskBar>
);

const App: React.FunctionComponent = () => (
	<Screen>
		<GlobalStyle />
		<Header />
		<Frame>
			<TitleBar>
				<YellowButton $w={27} $h={12}>
					<Icon name="badge" size={11} />
					<Cell $w={12} />
				</YellowButton>
				<Title>Create G/L Account Centrally</Title>
			</TitleBar>
			<AppBar>
				<Cell $w={24}>
					<Icon name="tree" size={12} />
				</Cell>
				<Cell $w={17}>
					<Icon name="undo" size={12} />
				</Cell>
				<Cell $w={16}>
					<Icon name="redo" size={11} />
				</Cell>
				<Sep $m={0} />
				<Cell $w={20} $center>
					<Icon name="left" size={9} />
				</Cell>
				<Cell $w={14} $center>
					<Icon name="right" size={9} />
				</Cell>
				<Sep $m={4} />
				<Cell $w={16}>
					<Icon name="display" size={12} />
				</Cell>
				<Cell $w={27}>
					<Icon name="other" size={11} />
				</Cell>
				<Cell $w={125}>Edit financial statement version</Cell>
				<Cell $w={40}>Edit set</Cell>
				<Cell $w={70}>Edit cost element</Cell>
			</AppBar>
			<Body>
				<Tree />
				<Splitter />
				<Details />
			</Body>
		</Frame>
		<Status />
		<ValueHelp />
		<Pointer>
			<svg width="12" height="19" viewBox="0 0 12 19">
				<path d="M1 1v14l3-3 3 6 2.500-1L7 11.500h4z" fill="#fff" stroke="#7c8086" />
			</svg>
		</Pointer>
		<Windows />
	</Screen>
);

export default App;
